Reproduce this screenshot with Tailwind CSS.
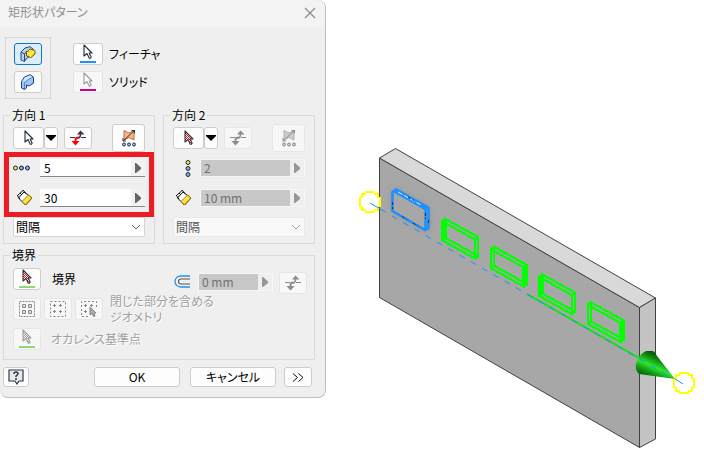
<!DOCTYPE html>
<html lang="ja">
<head>
<meta charset="utf-8">
<meta name="viewport" content="width=device-width, initial-scale=1">
<title>矩形状パターン</title>
<script src="https://cdn.jsdelivr.net/npm/@tailwindcss/browser@4"></script>
</head>
<body class="bg-white text-black text-[12px] leading-4 font-['Noto_Sans_CJK_JP',sans-serif] [font-feature-settings:'palt']">
<svg class="absolute size-0" aria-hidden="true">
  <defs>
    <pattern id="redcheck" width="2" height="2" patternUnits="userSpaceOnUse"><path fill="#fff" d="M0 0h2v2H0z"/><path fill="#e8121c" d="M0 0h1v1H0zM1 1h1v1H1z"/></pattern>
    <pattern id="graycheck" width="2" height="2" patternUnits="userSpaceOnUse"><path fill="#fff" d="M0 0h2v2H0z"/><path fill="#999" d="M0 0h1v1H0zM1 1h1v1H1z"/></pattern>
    <linearGradient id="gold" x2="1" y2="1"><stop stop-color="#fffbb0"/><stop offset=".5" stop-color="#ffe136"/><stop offset="1" stop-color="#f0b400"/></linearGradient>
    <symbol id="cursor" viewBox="0 0 10 16"><path d="M1 1v11l3-2.5 2.3 4.8q1.8.2 1.8-1.2L6.2 9H9z" stroke="currentColor" stroke-width="1.1" stroke-linejoin="round"/></symbol>
    <symbol id="flip" viewBox="0 0 18 16"><path d="M1 7.500h5M12 7.500h5" stroke="currentColor" fill="none"/><path d="M9 8q2.500 0 2.500-4.500" fill="none" stroke="currentColor" stroke-width="1.500"/><path d="M8 4.500 11.500.5 15.500 4.500z" fill="currentColor"/></symbol>
    <symbol id="flipdown" viewBox="0 0 18 16"><path d="M9.500 7.500Q6.500 7.500 6.500 10v2" fill="none" stroke="currentColor" stroke-width="1.800"/><path d="M2.500 11h8l-4 4.500z" fill="currentColor"/></symbol>
    <symbol id="ruler" viewBox="0 0 16 16"><path d="M7 2 15 8 8.500 15 1.500 8z" fill="#fff" stroke="#111"/><path d="M11.500 5 15 8 8.500 15 5 11.500z" fill="url(#gold)" stroke="#7a6200" stroke-width=".8"/><path d="M0 6 6.500 0M0 5l3 4M6 0l3 3.500M3 3l2 2" fill="none" stroke="#111"/></symbol>
    <symbol id="mirror" viewBox="0 0 16 18"><path d="M3 1.500 8 4l5-2.500v9.500L8 8.500 3 11z" fill="var(--plane)" stroke="var(--edge)" stroke-width=".9"/><path d="M2 12 13.500 1.500M10.500 1.500h3v3M2 9v3h3" fill="none" stroke="currentColor"/><g fill="var(--dot)" stroke="currentColor"><circle cx="3" cy="15.500" r="1.500"/><circle cx="8" cy="15.500" r="1.500"/><circle cx="13" cy="15.500" r="1.500"/></g></symbol>
    <symbol id="solid" viewBox="0 0 16 16"><path d="M1.500 7.500 4.500 3 10 .7l3.500 2.500v6L9 12l-2.500-1V14L4.500 15.500 1.500 14z" fill="#9fc5f1" stroke="#1c3f86" stroke-linejoin="round"/><path d="M4.500 8.500 9 5l4.500-1.800M4.500 8.500v6.500" fill="none" stroke="#5686c6"/><path d="M5 3.500 10 1.500 12 3 8.500 4.500 4.500 7.500 2.500 7z" fill="#d5e8fc"/></symbol>
    <symbol id="feature" viewBox="0 0 16 16"><path d="M1 6 5 2 10 .7 13 3v5L6 13l-1.500 2.500L1 14z" fill="#b9d0ee" stroke="#26457f" stroke-linejoin="round"/><path d="M1 6 4.500 8v7M4.500 8 7 5" fill="none" stroke="#26457f"/><path d="M6.500 6.500 10 3l5 1.500v3.500l-4 3.500L6.500 10z" fill="#ffdb24" stroke="#6d5600"/><path d="M7 7 10.500 8l4-3M10.500 8v3" fill="none" stroke="#fff6a8"/></symbol>
    <symbol id="play" viewBox="0 0 8 10"><path d="M1 0h1l5 4.500V6L2 10H1z" fill="currentColor"/></symbol>
    <symbol id="down" viewBox="0 0 10 6"><path d="m1 1 4 4 4-4" fill="none" stroke="currentColor"/></symbol>
  </defs>
</svg>
<main class="flex items-start">
  <form class="w-[326px] shrink-0 rounded-b-lg rounded-tr-lg border-r border-b border-[#bdbdbd] bg-[#efefef] overflow-hidden">
    <header class="flex h-[27px] items-center justify-between bg-[#f3f3f3] pl-2 pr-[6px] text-[#8f8f8f]">
      <h1 class="pb-1">矩形状パターン</h1>
      <button type="button" aria-label="閉じる" class="size-4 pb-1"><svg viewBox="0 0 14 14" class="size-[14px]" fill="none" stroke="#8a8a8a" stroke-width="1.200"><path d="m2 2 10 10M12 2 2 12"/></svg></button>
    </header>

    <div class="flex flex-col px-[3px] pt-[10px] pb-[10px]">
      <section class="flex gap-[22px] pl-[2px]">
        <div class="flex h-[62px] w-[46px] flex-col items-center justify-center gap-[6px] border border-[#dadada]">
          <button type="button" aria-label="フィーチャをパターン化" class="flex h-[22px] w-7 items-center justify-center rounded-[3px] border border-[#0a78d0] bg-[#dcedfa]"><svg class="size-4"><use href="#feature"/></svg></button>
          <button type="button" aria-label="ソリッドをパターン化" class="flex h-[22px] w-7 items-center justify-center rounded-[3px] border border-[#cdcdcd] bg-[#fbfbfb]"><svg class="size-4"><use href="#solid"/></svg></button>
        </div>
        <div class="flex flex-col justify-center gap-[6px]">
          <div class="flex items-center gap-[6px]">
            <button type="button" id="pick-feature" class="flex h-[22px] w-[30px] flex-col items-center justify-between rounded-[3px] border border-[#cdcdcd] bg-[#fdfdfd] pb-px text-[#222b3a]"><svg class="h-4 w-[10px] fill-white"><use href="#cursor"/></svg><span class="h-[2px] w-4 bg-[#1e90ff]"></span></button>
            <label for="pick-feature">フィーチャ</label>
          </div>
          <div class="flex items-center gap-[6px]">
            <button type="button" id="pick-solid" class="flex h-[22px] w-[30px] flex-col items-center justify-between rounded-[3px] border border-[#e6e6e6] bg-[#f7f7f7] pb-px text-[#999]"><svg class="h-4 w-[10px] fill-white"><use href="#cursor"/></svg><span class="h-[2px] w-4 bg-[#c80096]"></span></button>
            <label for="pick-solid">ソリッド</label>
          </div>
        </div>
      </section>

      <div class="mt-2 flex gap-2">
        <fieldset class="w-[152px] border border-[#dadada] px-[9px] pb-[6px]">
          <legend class="h-4 px-[2px] -ml-[3px]">方向 1</legend>
          <div class="flex h-[30px] items-center">
            <button type="button" aria-label="方向 1 を選択" class="flex h-[22px] w-[31px] items-center justify-center rounded-[3px] border border-[#cdcdcd] bg-[#fdfdfd] text-[#222b3a]"><svg class="h-4 w-[10px] fill-white"><use href="#cursor"/></svg></button>
            <button type="button" aria-label="選択オプション" class="flex h-[22px] w-[14px] items-center justify-center rounded-[3px] border border-[#cdcdcd] bg-[#fdfdfd]"><svg class="h-[6px] w-[10px]" viewBox="0 0 10 6"><path d="M0 0h10v1L5 6 0 1z"/></svg></button>
            <button type="button" aria-label="反転" class="ml-[6px] flex h-[22px] w-7 items-center justify-center rounded-[3px] border border-[#cdcdcd] bg-[#fdfdfd]"><svg class="h-4 w-[18px]" viewBox="0 0 18 16"><use href="#flip" color="#30384a"/><use href="#flipdown" color="#f00"/></svg></button>
            <button type="button" aria-label="中間面" class="ml-auto flex h-7 w-[33px] items-center justify-center rounded-[3px] border border-[#cdcdcd] bg-[#fdfdfd] text-[#2a3548] [--dot:#8bbcf0] [--edge:#b76530] [--plane:#f8b583]"><svg class="h-[18px] w-4"><use href="#mirror"/></svg></button>
          </div>
          <div class="relative mt-[6px] flex flex-col gap-3">
            <div class="flex h-[18px] items-center">
              <label for="count1" aria-label="方向 1 の数" class="w-[27px]"><svg class="h-[6px] w-[17px]" viewBox="0 0 17 6" stroke="#1d2533"><circle cx="2.500" cy="3" r="2" fill="#ffe642"/><circle cx="8.500" cy="3" r="2" fill="#77afe0"/><circle cx="14.500" cy="3" r="2" fill="#77afe0"/></svg></label>
              <div class="flex h-[18px] flex-1 border-b border-[#888] bg-white">
                <input id="count1" value="5" class="w-0 flex-1 pl-1 outline-none">
                <button type="button" aria-label="数の値メニュー" class="flex w-[14px] items-center justify-center bg-[#f2f2f2] text-[#666]"><svg class="h-[10px] w-2"><use href="#play"/></svg></button>
              </div>
            </div>
            <div class="flex h-[18px] items-center">
              <label for="space1" aria-label="方向 1 の間隔" class="w-[27px] pl-1"><svg class="size-4"><use href="#ruler"/></svg></label>
              <div class="flex h-[18px] flex-1 border-b border-[#888] bg-white">
                <input id="space1" value="30" class="w-0 flex-1 pl-1 outline-none">
                <button type="button" aria-label="間隔の値メニュー" class="flex w-[14px] items-center justify-center bg-[#f2f2f2] text-[#666]"><svg class="h-[10px] w-2"><use href="#play"/></svg></button>
              </div>
            </div>
            <div class="pointer-events-none absolute -inset-x-[9px] -top-[7px] -bottom-[10px] border-[5px] border-[#ed1c24]"></div>
          </div>
          <div class="relative mt-[10px]">
            <select aria-label="方向 1 の方法" class="block h-5 w-full appearance-none rounded-[2px] border border-[#d5d5d5] bg-white pl-[2px]"><option>間隔</option></select>
            <svg class="pointer-events-none absolute top-[7px] right-1 h-[6px] w-[10px] text-[#666]"><use href="#down"/></svg>
          </div>
        </fieldset>

        <fieldset class="w-[152px] border border-[#dadada] px-[9px] pb-[6px]">
          <legend class="h-4 px-[2px] -ml-[3px]">方向 2</legend>
          <div class="flex h-[30px] items-center">
            <button type="button" aria-label="方向 2 を選択" class="flex h-[22px] w-[31px] items-center justify-center rounded-[3px] border border-[#cdcdcd] bg-[#fdfdfd] text-[#333]"><svg class="h-4 w-[10px] fill-[url(#redcheck)]"><use href="#cursor"/></svg></button>
            <button type="button" aria-label="選択オプション" class="flex h-[22px] w-[14px] items-center justify-center rounded-[3px] border border-[#cdcdcd] bg-[#fdfdfd]"><svg class="h-[6px] w-[10px]" viewBox="0 0 10 6"><path d="M0 0h10v1L5 6 0 1z"/></svg></button>
            <button type="button" disabled aria-label="反転" class="ml-[6px] flex h-[22px] w-7 items-center justify-center rounded-[3px] border border-[#e6e6e6] bg-[#f7f7f7] text-[#8c8c8c]"><svg class="h-4 w-[18px]" viewBox="0 0 18 16"><use href="#flip"/><use href="#flipdown"/></svg></button>
            <button type="button" disabled aria-label="中間面" class="ml-auto flex h-7 w-[33px] items-center justify-center rounded-[3px] border border-[#e6e6e6] bg-[#f7f7f7] text-[#8c8c8c] [--dot:#ccc] [--edge:#aaa] [--plane:#ccc]"><svg class="h-[18px] w-4"><use href="#mirror"/></svg></button>
          </div>
          <div class="mt-[6px] flex flex-col gap-3">
            <div class="flex h-[18px] items-center">
              <label for="count2" aria-label="方向 2 の数" class="w-[27px] pl-3"><svg class="h-[17px] w-[6px]" viewBox="0 0 6 17" stroke="#1d2533"><circle cx="3" cy="2.500" r="2" fill="#ffe642"/><circle cx="3" cy="8.500" r="2" fill="#77afe0"/><circle cx="3" cy="14.500" r="2" fill="#77afe0"/></svg></label>
              <div class="flex h-[18px] flex-1 border border-[#f7f7f7]">
                <input id="count2" disabled value="2" class="w-0 flex-1 bg-[#c8c8c8] pl-[3px] text-[#707070]">
                <button type="button" disabled aria-label="数の値メニュー" class="flex w-[14px] items-center justify-center text-[#969696]"><svg class="h-[10px] w-2"><use href="#play"/></svg></button>
              </div>
            </div>
            <div class="flex h-[18px] items-center">
              <label for="space2" aria-label="方向 2 の間隔" class="w-[27px] pl-[3px]"><svg class="size-4"><use href="#ruler"/></svg></label>
              <div class="flex h-[18px] flex-1 border border-[#f7f7f7]">
                <input id="space2" disabled value="10 mm" class="w-0 flex-1 bg-[#c8c8c8] pl-[3px] text-[#707070]">
                <button type="button" disabled aria-label="間隔の値メニュー" class="flex w-[14px] items-center justify-center text-[#969696]"><svg class="h-[10px] w-2"><use href="#play"/></svg></button>
              </div>
            </div>
          </div>
          <div class="relative mt-[10px]">
            <select disabled aria-label="方向 2 の方法" class="block h-5 w-full appearance-none rounded-[2px] border border-[#e8e8e8] bg-[#f9f9f9] pl-[2px] text-[#555] opacity-100"><option>間隔</option></select>
            <svg class="pointer-events-none absolute top-[7px] right-1 h-[6px] w-[10px] text-[#aaa]"><use href="#down"/></svg>
          </div>
        </fieldset>
      </div>

      <fieldset class="mt-[3px] w-[312px] border border-[#dadada] px-[9px] pb-[9px]">
        <legend class="h-4 px-[2px] -ml-[3px]">境界</legend>
        <div class="mt-[5px] flex h-[22px] items-center">
          <button type="button" id="boundary" class="flex h-[22px] w-7 flex-col items-center justify-between rounded-[3px] border border-[#cdcdcd] bg-[#fdfdfd] pb-px text-[#333]"><svg class="h-4 w-[10px] fill-[url(#redcheck)]"><use href="#cursor"/></svg><span class="h-[2px] w-4 bg-[#8fda70]"></span></button>
          <label for="boundary" class="ml-[11px]">境界</label>
          <label for="offset" aria-label="オフセット" class="ml-auto w-6 pt-1"><svg class="h-[13px] w-4" viewBox="0 0 16 13" fill="none"><path d="M16 1H6.500a5.500 5.500 0 0 0 0 11H16" stroke="#2491e8" stroke-width="1.300"/><path d="M16 4H7a2.500 2.500 0 0 0 0 5h9" stroke="#555" stroke-width="1.100"/></svg></label>
          <div class="mt-[5px] flex h-[18px] w-[75px] border border-[#f7f7f7]">
            <input id="offset" disabled value="0 mm" class="w-0 flex-1 bg-[#c8c8c8] pl-[3px] text-[#707070]">
            <button type="button" disabled aria-label="オフセットの値メニュー" class="flex w-[14px] items-center justify-center text-[#969696]"><svg class="h-[10px] w-2"><use href="#play"/></svg></button>
          </div>
          <button type="button" disabled aria-label="反転" class="mt-[7px] mr-[-2px] ml-[6px] flex h-[22px] w-7 items-center justify-center rounded-[3px] border border-[#e6e6e6] bg-[#f8f8f8] text-[#8c8c8c]"><svg class="h-4 w-[18px]" viewBox="0 0 18 16"><use href="#flip"/><use href="#flipdown"/></svg></button>
        </div>
        <div class="mt-2 flex h-[22px] items-center gap-[3px] text-[#a0a0a0]">
          <button type="button" disabled id="geom" class="flex h-[22px] w-7 items-center justify-center rounded-[3px] border border-[#e6e6e6] bg-[#f7f7f7]"><svg class="size-4" viewBox="0 0 16 16" fill="none" stroke="#888"><path d="M.5.5h15v15H.5z" stroke-dasharray="2 1"/><path d="M3.500 3.500h3v3h-3zM9.500 3.500h3v3h-3zM3.500 9.500h3v3h-3zM9.500 9.500h3v3h-3z" fill="#ddd"/></svg></button>
          <button type="button" disabled aria-label="重心" class="flex h-[22px] w-7 items-center justify-center rounded-[3px] border border-[#e6e6e6] bg-[#f7f7f7]"><svg class="size-4" viewBox="0 0 16 16" fill="none" stroke="#888"><path d="M.5.5h15v15H.5z" stroke-dasharray="2 2"/><path d="M4.500 3v3M3 4.500h3M10.500 3v3M9 4.500h3M4.500 9v3M3 10.500h3M10.500 9v3M9 10.500h3"/></svg></button>
          <button type="button" disabled aria-label="基準点" class="flex h-[22px] w-7 items-center justify-center rounded-[3px] border border-[#e6e6e6] bg-[#f7f7f7]"><svg class="size-4" viewBox="0 0 16 16" fill="none" stroke="#888"><path d="M15.500 6V.5H.5v15H8" stroke-dasharray="2 2"/><path d="M4.500 3v3M3 4.500h3M10.500 3v3M9 4.500h3M4.500 9v3M3 10.500h3"/><path d="M9 6v8l2-1.500 1.500 3 1.500-.5-1-3h2z" fill="#aaa"/></svg></button>
          <label for="geom" class="ml-1 leading-4 [text-shadow:1px_1px_0_white]"><span class="block">閉じた部分を含める</span><span class="block">ジオメトリ</span></label>
        </div>
        <div class="mt-2 flex h-[22px] items-center text-[#a0a0a0]">
          <button type="button" disabled id="base" class="flex h-[22px] w-7 flex-col items-center justify-between rounded-[3px] border border-[#e6e6e6] bg-[#f7f7f7] pb-px"><svg class="h-4 w-[10px] fill-[url(#graycheck)]"><use href="#cursor"/></svg><span class="h-[2px] w-4 bg-[#8fda70]"></span></button>
          <label for="base" class="ml-[10px] [text-shadow:1px_1px_0_white]">オカレンス基準点</label>
        </div>
      </fieldset>

      <footer class="mt-[7px] flex pr-[10px]">
        <button type="button" aria-label="ヘルプ" class="mr-auto flex h-5 w-[26px] items-center justify-center rounded-[3px] border border-[#cdcdcd] bg-[#fdfdfd]"><svg class="size-4" viewBox="0 0 16 16" fill="none" stroke="#2f3947" stroke-width="1.200"><path d="M1 1h14v11h-4l-2 3-2-3H1z" fill="#e5eaf1"/><path d="M6 5V4q2-2 4 0 .5 1-2 3v1M8 9v2" stroke-width="1.500"/></svg></button>
        <button type="submit" class="h-5 w-[86px] rounded-[3px] border border-[#cdcdcd] bg-[#fdfdfd]"><span class="block -mt-px">OK</span></button>
        <button type="button" class="ml-[10px] h-5 w-[86px] rounded-[3px] border border-[#cdcdcd] bg-[#fdfdfd]"><span class="block -mt-px">キャンセル</span></button>
        <button type="button" aria-label="詳細" class="ml-2 flex h-5 w-7 items-center justify-center rounded-[3px] border border-[#cdcdcd] bg-[#fdfdfd]"><svg class="h-[9px] w-3" viewBox="0 0 12 9" fill="none" stroke="#111"><path d="m1 .5 4.500 4L1 8.500M6.500.5l4.500 4-4.500 4"/></svg></button>
      </footer>
    </div>
  </form>

  <svg class="min-w-0 flex-1" viewBox="326 0 378 458" role="img" aria-label="パターンのプレビュー">
    <defs>
      <linearGradient id="cone" gradientUnits="userSpaceOnUse" x1="655" y1="354" x2="645" y2="376"><stop stop-color="#075d07"/><stop offset=".2" stop-color="#0f8f0f"/><stop offset=".5" stop-color="#2fe62f"/><stop offset=".75" stop-color="#12a012"/><stop offset="1" stop-color="#096309"/></linearGradient>
      <filter id="glow" x="-30%" y="-30%" width="160%" height="160%"><feGaussianBlur stdDeviation="3"/></filter>
      <g id="slot" fill="none"><path d="M442.500 221.500 475 239.500v19l-32.500-18zM445.500 219 478 237v19l-32.500-18zM442.500 221.500l3-2.500M475 239.500l3-2.500M475 258.500l3-2.500M442.500 240.500l3-2.500"/></g>
      <path id="ring" d="M-5-10H5M10-5V5M5 10H-5M-10 5V-5M4-8h4v4M8 4v4H4M-4 8h-4V4M-8-4v-4h4" fill="none" stroke="#ff0" stroke-width="2" shape-rendering="crispEdges"/>
    </defs>
    <g stroke="#404040" stroke-linejoin="round">
      <path fill="#a7a7a7" d="M379.500 158 639.500 307.500v140L379.500 297.500z"/>
      <path fill="#d9d9d9" d="M379.500 158 395.500 148.500 655.500 298l-16 9.500z"/>
      <path fill="#c4c4c4" d="M639.500 307.500 655.500 298v141l-16 8.500z"/>
    </g>
    <path d="M395 192 427 210v18l-32-18z" fill="none" stroke="#666" stroke-opacity=".35" stroke-width="5" filter="url(#glow)"/>
    <path d="M394 192 426 210v19l-32-18z" fill="#a7a7a7"/>
    <g stroke="#00ff00" stroke-width="2.200" shape-rendering="crispEdges">
      <use href="#slot"/><use href="#slot" x="48.500" y="27.800"/><use href="#slot" x="97" y="55.600"/><use href="#slot" x="145.500" y="83.400"/>
    </g>
    <g fill="none" stroke="#1e90ff" stroke-width="2.600" stroke-linejoin="round">
      <path d="M392.500 192v19L425 230l3.500-2v-20L396 189.500z"/>
      <path d="M394 191 425.500 209v20M396 190l32 18"/>
      <path d="m398 192 23 13" stroke="#e5eaf0" stroke-width="1" stroke-dasharray="5 2"/>
      <path d="M392.500 202v7M402 216.500l5 3M413 223l5 3M425.500 213v6M428.500 220v5M408 197l6 3.500" stroke="#333" stroke-width="1" stroke-dasharray="3 2"/>
    </g>
    <path d="M527 294 640 358.500" stroke="#00f000" stroke-width="2"/>
    <use href="#ring" x="370" y="202"/><use href="#ring" x="684" y="383"/>
    <path d="M646 351h7q2 1 4 5l18 23-36-5q-4-4-3-10 3-10 10-13z" fill="url(#cone)"/>
    <path d="m370 203 15.500 9" stroke="#1e90ff"/>
    <path d="M392 216 668 375.500" stroke="#1e90ff" stroke-dasharray="6 7"/>
    <path d="m675 379 8 5" stroke="#1e90ff"/>
  </svg>
</main>
</body>
</html>
